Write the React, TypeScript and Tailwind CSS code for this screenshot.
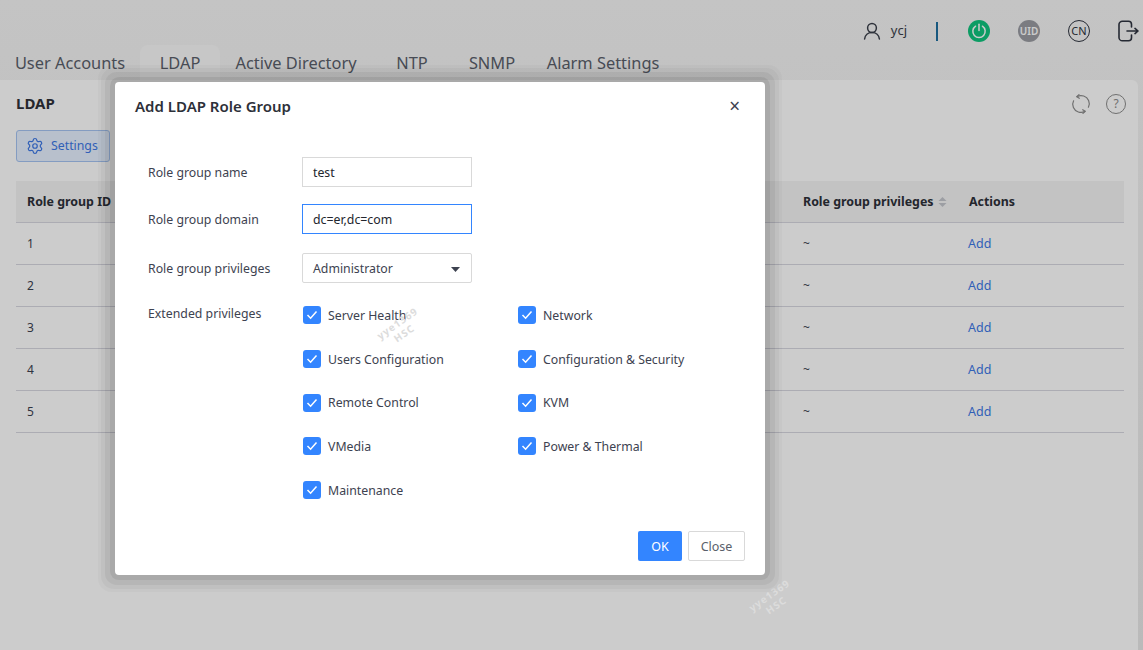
import { Settings } from "lucide-react";

const font = "font-['Noto_Sans','Open_Sans',sans-serif]";

const tabs = [
  { label: "User Accounts", className: "ml-[15px] w-[110px]" },
  { label: "LDAP", className: "ml-[15px] w-[80px] rounded-t-lg bg-[#f9f9f9]" },
  { label: "Active Directory", className: "ml-[15px] w-[122px]" },
  { label: "NTP", className: "ml-[39px] w-[32px]" },
  { label: "SNMP", className: "ml-[40px] w-[48px]" },
  { label: "Alarm Settings", className: "ml-[31px] w-[112px]" },
];

const privileges = [
  "Server Health",
  "Network",
  "Users Configuration",
  "Configuration & Security",
  "Remote Control",
  "KVM",
  "VMedia",
  "Power & Thermal",
  "Maintenance",
];

function UserIcon() {
  return (
    <svg width="18" height="18" viewBox="0 0 18 18" fill="none" stroke="#3a3f4a" strokeWidth="1.5">
      <circle cx="9" cy="6" r="4.4" />
      <path d="M1.6 17c.4-4 3.4-6.6 7.4-6.6s7 2.6 7.4 6.6" strokeLinecap="round" />
    </svg>
  );
}

function PowerIcon() {
  return (
    <div className="grid h-[22px] w-[22px] place-items-center rounded-full bg-[#10c47d]">
      <svg width="16" height="16" viewBox="0 0 14 14" fill="none" stroke="#fff" strokeWidth="1.3" strokeLinecap="round">
        <path d="M4 2.8a5.4 5.4 0 1 0 6 0" />
        <path d="M7 1v5.6" />
      </svg>
    </div>
  );
}

function LogoutIcon() {
  return (
    <svg width="22" height="22" viewBox="0 0 22 22" fill="none" stroke="#2f3440" strokeWidth="1.6" strokeLinecap="round" strokeLinejoin="round">
      <path d="M14.5 7V4.2A3 3 0 0 0 11.5 1.2H5.4A3.4 3.4 0 0 0 2 4.6v12.8a3.4 3.4 0 0 0 3.4 3.4h6.1a3 3 0 0 0 3-3V15" />
      <path d="M10 11h11M18 8.4l3 2.6-3 2.6" />
    </svg>
  );
}

function SyncIcon() {
  return (
    <svg width="20" height="20" viewBox="0 0 20 20" fill="none" stroke="#8c8c8c" strokeWidth="1.2" strokeLinecap="round" strokeLinejoin="round">
      <path d="M6 2.6A8.3 8.3 0 0 1 17.6 6.6c1 2.2.9 4.6-.2 6.6" />
      <path d="M14 17.4A8.3 8.3 0 0 1 2.4 13.4c-1-2.2-.9-4.6.2-6.6" />
      <path d="M8 .6 5.8 2.7 8.3 4.3M12 19.4l2.2-2.1-2.5-1.6" />
    </svg>
  );
}

function Watermark({ className }: { className: string }) {
  return (
    <div className={`absolute -rotate-[35deg] text-center text-[10px] font-bold leading-[12px] tracking-[1px] text-[#dcdcdc] ${className}`}>
      yye1369
      <br />
      HSC
    </div>
  );
}

function CheckItem({ label }: { label: string }) {
  return (
    <label className="flex h-[18px] items-center gap-[7px] text-[12.3px] text-[#3d4250]">
      <span className="grid h-[18px] w-[18px] place-items-center rounded-[3px] bg-[#3385ff]">
        <svg width="12" height="10" viewBox="0 0 12 10" fill="none" stroke="#fff" strokeWidth="1.5">
          <path d="M1.5 5 4.6 8.2 10.5 1.5" />
        </svg>
      </span>
      <span className="pt-[2px]">{label}</span>
    </label>
  );
}

export default function App() {
  return (
    <div className={`relative h-screen overflow-hidden bg-gradient-to-b from-[#f5f5f5] to-[#e9e9e9] ${font}`}>
      <header className="flex h-[45px] items-end">
        <div className="mb-[3px] ml-auto flex items-center">
          <UserIcon />
          <span className="ml-[10px] text-[13px] text-[#3a3f4a]">ycj</span>
          <span className="ml-[29px] h-[19px] w-[2px] bg-[#1f6f9f]" />
          <span className="ml-[30px]"><PowerIcon /></span>
          <span className="ml-[28px] grid h-[22px] w-[22px] place-items-center rounded-full bg-[#9a9ca2] text-[10px] font-semibold text-white">UID</span>
          <span className="ml-[28px] grid h-[22px] w-[22px] place-items-center rounded-full border-[1.5px] border-[#2f3440] text-[11px] text-[#2f3440]">CN</span>
          <span className="ml-[27px] mr-[4px]"><LogoutIcon /></span>
        </div>
      </header>

      <nav className="flex h-[35px] text-[16.4px] text-[#5a5f6b]">
        {tabs.map((tab) => (
          <div key={tab.label} className={`flex items-center justify-center whitespace-nowrap pt-[1px] ${tab.className}`}>
            {tab.label}
          </div>
        ))}
      </nav>

      <main className="h-[570px] w-[1138px] rounded-tr-md bg-white px-4">
        <div className="flex h-[50px] items-center justify-between pb-[3px]">
          <h2 className="text-[15px] font-bold text-[#2d3039]">LDAP</h2>
          <div className="mr-[-4px] flex items-center gap-[15px]">
            <SyncIcon />
            <span className="grid h-5 w-5 place-items-center rounded-full border border-[#8c8c8c] text-xs text-[#8c8c8c]">?</span>
          </div>
        </div>
        <button className="flex h-8 w-[94px] items-center gap-[7px] rounded-[3px] border border-[#a6c4f2] bg-[#e6f0ff] pl-[9px] text-[12.3px] text-[#3d78e6]">
          <Settings size={18} strokeWidth={1.6} />
          Settings
        </button>

        <table className="mt-[19px] w-[1108px] table-fixed border-collapse text-[12px] text-[#3d4250]">
          <colgroup>
            <col className="w-[776px]" />
            <col className="w-[166px]" />
            <col />
          </colgroup>
          <thead>
            <tr className="h-[41px] border-b border-[#d8d8e0] bg-[#f4f4f4] text-left text-[12.4px] font-bold text-[#2d3039]">
              <th className="pl-[11px] pt-[2px]">Role group ID</th>
              <th className="pl-[11px] pt-[2px]">
                <span className="flex items-center gap-1">
                  Role group privileges
                  <svg width="9" height="12" viewBox="0 0 9 12" fill="#c4c6cc">
                    <path d="M4.5 1 8.5 5H.5zM4.5 11 .5 7h8z" />
                  </svg>
                </span>
              </th>
              <th className="pl-[11px] pt-[2px]">Actions</th>
            </tr>
          </thead>
          <tbody>
            {[1, 2, 3, 4, 5].map((id) => (
              <tr key={id} className="h-[42px] border-b border-[#d8d8e0]">
                <td className="pl-[11px] pt-[2px]">{id}</td>
                <td className="pl-[11px] pt-[2px]">~</td>
                <td className="pl-[10px] pt-[2px] text-[12.5px] text-[#3d78e6]">Add</td>
              </tr>
            ))}
          </tbody>
        </table>
      </main>

      <div className="absolute inset-0 bg-black/20" />
      <Watermark className="left-[749px] top-[588px]" />

      <div className="absolute left-[115px] top-[82px] h-[493px] w-[650px] rounded-[4px] bg-white text-[#3d4250] shadow-[0_0_0_5px_rgba(0,0,0,0.07),0_0_0_10px_rgba(0,0,0,0.05),0_0_0_14px_rgba(0,0,0,0.03),0_0_0_17px_rgba(0,0,0,0.025)]">
        <div className="flex h-[50px] items-center justify-between pb-[2px] pl-5 pr-[25px]">
          <h1 className="text-[15px] font-semibold text-[#2d3039]">Add LDAP Role Group</h1>
          <span className="text-[19px] leading-none text-[#3d4250]">×</span>
        </div>

        <div className="pl-[33px] pt-[25px] text-[12.3px]">
          <div className="flex h-[30px] items-center">
            <span className="w-[154px] pt-[2px]">Role group name</span>
            <div className="flex h-[30px] w-[170px] items-center border border-[#d9d9d9] px-[10px] pt-[2px] text-[#23262e]">test</div>
          </div>
          <div className="mt-[17px] flex h-[30px] items-center">
            <span className="w-[154px] pt-[2px]">Role group domain</span>
            <div className="flex h-[30px] w-[170px] items-center border border-[#3385ff] px-[10px] pt-[2px] text-[#23262e]">dc=er,dc=com</div>
          </div>
          <div className="mt-[19px] flex h-[30px] items-center">
            <span className="w-[154px] pt-[2px]">Role group privileges</span>
            <div className="flex h-[30px] w-[170px] items-center justify-between rounded-[2px] border border-[#d9d9d9] pl-[10px] pr-[11px] pt-[2px]">
              Administrator
              <svg width="9" height="5" viewBox="0 0 9 5" fill="#3d4250"><path d="M0 0h9L4.5 5z" /></svg>
            </div>
          </div>
          <div className="mt-[22px] flex">
            <span className="w-[155px] leading-[18px]">Extended privileges</span>
            <div className="mt-[1px] grid grid-cols-[215px_1fr] auto-rows-[43.75px]">
              {privileges.map((item) => (
                <CheckItem key={item} label={item} />
              ))}
            </div>
          </div>
        </div>

        <div className="absolute bottom-[14px] right-[20px] flex gap-[6px] text-[12.5px]">
          <button className="h-[30px] w-[44px] rounded-[2px] bg-[#3385ff] pt-[2px] text-white">OK</button>
          <button className="h-[30px] w-[57px] rounded-[2px] border border-[#d9d9d9] pt-[2px] text-[#5a5f6b]">Close</button>
        </div>
        <Watermark className="left-[262px] top-[234px]" />
      </div>
    </div>
  );
}
